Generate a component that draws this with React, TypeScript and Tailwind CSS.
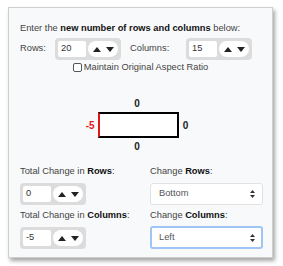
const Spinner = () => (
  <div className="flex h-[16px] w-[30px] items-center justify-center gap-[5px] rounded-full bg-white">
    <svg width="8" height="5" viewBox="0 0 8 5">
      <path d="M0 5 L4 0 L8 5 Z" fill="#222" />
    </svg>
    <svg width="8" height="5" viewBox="0 0 8 5">
      <path d="M0 0 L4 5 L8 0 Z" fill="#222" />
    </svg>
  </div>
);

const NumberBox = ({ value }: { value: string }) => (
  <div className="flex h-[22px] w-fit items-center gap-[2px] rounded-[4px] bg-[#dcdcdc] px-[3px]">
    <div className="flex h-[16px] w-[28px] items-center rounded-[2px] bg-white pl-[3px] text-[#333]">{value}</div>
    <Spinner />
  </div>
);

const Select = ({ value, focus }: { value: string; focus?: boolean }) => (
  <div
    className={
      focus
        ? "flex h-[23px] w-[113px] items-center justify-between rounded-[3px] border-2 border-[#9ec5f5] bg-white pl-[7px] pr-[6px] text-[#555]"
        : "flex h-[22px] w-[113px] items-center justify-between rounded-[3px] border border-[#e2e2e2] bg-white pl-[8px] pr-[7px] text-[#555]"
    }
  >
    <span>{value}</span>
    <svg width="5" height="8" viewBox="0 0 5 8">
      <path d="M0 3 L2.5 0 L5 3 Z M0 5 L2.5 8 L5 5 Z" fill="#333" />
    </svg>
  </div>
);

const App = () => {
  return (
    <div className="h-[266px] w-[283px] bg-white pl-[8px] pt-[7px] font-['Liberation_Sans',sans-serif] text-[9.3px] text-[#444]">
      <div className="h-[251px] w-[265px] border border-[#cfcfcf] bg-[#f8f9fa] px-[11px] pt-[13px] shadow-[2px_3px_4px_rgba(0,0,0,0.35)]">
        <p className="whitespace-nowrap leading-[14px]">
          Enter the <b className="text-[#111]">new number of rows and columns</b> below:
        </p>
        <div className="mt-[3px] flex items-center">
          <span className="w-[35px]">Rows:</span>
          <NumberBox value="20" />
          <span className="ml-[9px] w-[56px]">Columns:</span>
          <NumberBox value="15" />
        </div>
        <label className="flex items-center justify-center gap-[2px] leading-[14px]">
          <span className="inline-block h-[9px] w-[9px] rounded-[2px] border border-[#555] bg-white" />
          Maintain Original Aspect Ratio
        </label>

        <div className="mt-[24px] flex flex-col items-center pr-[7px] text-[10px] font-bold text-[#222]">
          <span className="leading-[12px]">0</span>
          <div className="mt-[2px] flex items-center">
            <span className="mr-[3px] text-[#e8141a]">-5</span>
            <div className="h-[26px] w-[81px] border-2 border-l-[#e8141a] border-black bg-white" />
            <span className="ml-[4px]">0</span>
          </div>
          <span className="mt-[3px] leading-[12px]">0</span>
        </div>

        <div className="mt-[11px] grid grid-cols-[130px_1fr] items-start gap-y-[3px]">
          <div className="flex flex-col gap-[5px]">
            <span className="whitespace-nowrap leading-[14px]">
              Total Change in <b className="text-[#111]">Rows</b>:
            </span>
            <NumberBox value="0" />
          </div>
          <div className="flex flex-col gap-[5px]">
            <span className="whitespace-nowrap leading-[14px]">
              Change <b className="text-[#111]">Rows</b>:
            </span>
            <Select value="Bottom" />
          </div>
          <div className="flex flex-col gap-[5px]">
            <span className="whitespace-nowrap leading-[14px]">
              Total Change in <b className="text-[#111]">Columns</b>:
            </span>
            <NumberBox value="-5" />
          </div>
          <div className="flex flex-col gap-[4px]">
            <span className="whitespace-nowrap leading-[14px]">
              Change <b className="text-[#111]">Columns</b>:
            </span>
            <Select value="Left" focus />
          </div>
        </div>
      </div>
    </div>
  );
};

export default App;
